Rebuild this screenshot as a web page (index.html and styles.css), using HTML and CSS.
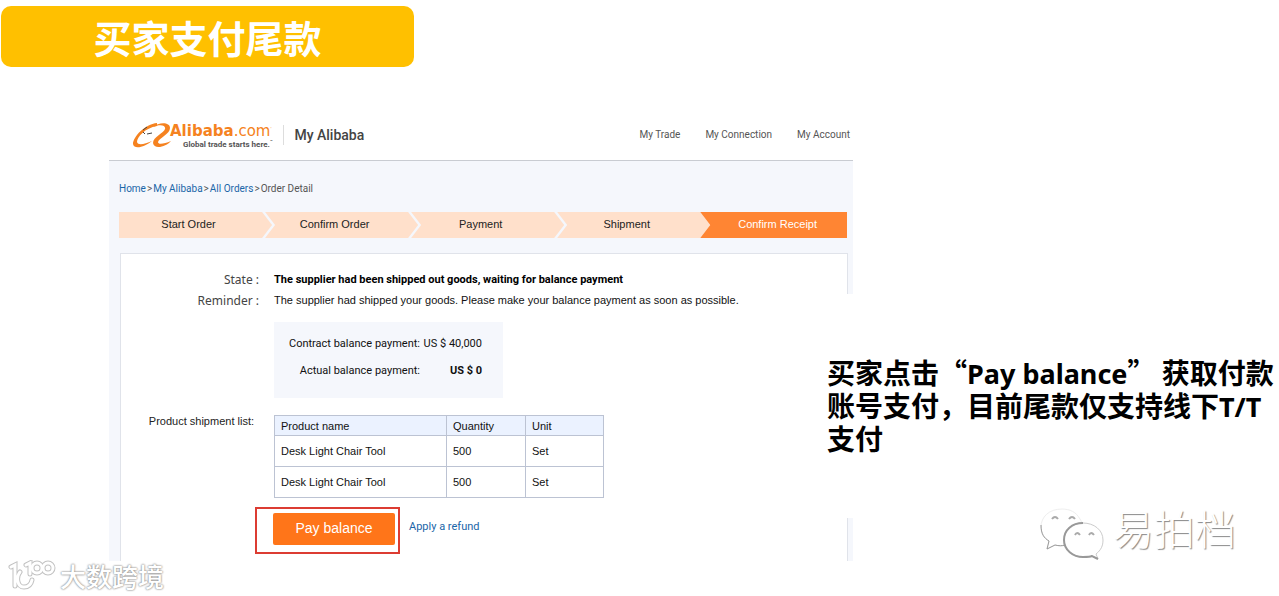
FILE: index.html
```
<!DOCTYPE html>
<html lang="zh-CN">
<head>
    <meta charset="UTF-8">
    <meta name="viewport" content="width=device-width, initial-scale=1.0">
    <title>买家支付尾款</title>
    <link rel="stylesheet" href="styles.css">
</head>
<body>

    <h1 class="slide-title">买家支付尾款</h1>

    <main class="slide">
        <div class="page">
            <header class="header">
                <div class="logo">
                    <svg class="logo-mark" viewBox="0 0 40 26" aria-hidden="true">
                        <path d="M24 1C12 2 0 15 0 22C1 28 12 25 19 19C12 22 5 24 4 20C4 15 12 6 24 4Z" fill="#f58220"/>
                        <path d="M20 5C26 0 37 0 37 6C37 12 26 16 25 20C25 23 31 22 38 19C33 25 21 28 20 21C20 15 31 11 32 7C33 3 27 2 20 5Z" fill="#f58220"/>
                        <path d="M10 8L14 5M10 10L12 12M14 12L19 11" fill="none" stroke="#444" stroke-width="1"/>
                    </svg>
                    <div class="logo-text">
                        <span class="logo-name"><b>Alibaba</b>.com<sup>'</sup></span>
                        <span class="logo-slogan">Global trade starts here.<sup>™</sup></span>
                    </div>
                </div>
                <span class="site-name">My Alibaba</span>
                <nav class="menu">
                    <a href="#">My Trade</a>
                    <a href="#">My Connection</a>
                    <a href="#">My Account</a>
                </nav>
            </header>

            <nav class="breadcrumb">
                <a href="#">Home</a><span>&gt;</span><a href="#">My Alibaba</a><span>&gt;</span><a href="#">All Orders</a><span>&gt;</span><span>Order Detail</span>
            </nav>

            <ol class="steps">
                <li>Start Order</li>
                <li>Confirm Order</li>
                <li>Payment</li>
                <li>Shipment</li>
                <li class="active">Confirm Receipt</li>
            </ol>

            <section class="order">
                <span class="label">State :</span>
                <strong class="state">The supplier had been shipped out goods, waiting for balance payment</strong>

                <span class="label">Reminder :</span>
                <span class="reminder">The supplier had shipped your goods. Please make your balance payment as soon as possible.</span>

                <dl class="amounts">
                    <dt>Contract balance payment:</dt>
                    <dd>US $ 40,000</dd>
                    <dt>Actual balance payment:</dt>
                    <dd><b>US $ 0</b></dd>
                </dl>

                <span class="label list-label">Product shipment list:</span>
                <table class="products">
                    <thead>
                        <tr><th class="col-name">Product name</th><th class="col-qty">Quantity</th><th>Unit</th></tr>
                    </thead>
                    <tbody>
                        <tr><td>Desk Light Chair Tool</td><td>500</td><td>Set</td></tr>
                        <tr><td>Desk Light Chair Tool</td><td>500</td><td>Set</td></tr>
                    </tbody>
                </table>

                <div class="actions">
                    <div class="highlight">
                        <button type="button" class="pay">Pay balance</button>
                    </div>
                    <a class="refund" href="#">Apply a refund</a>
                </div>
            </section>
        </div>

        <p class="note">买家点击“<span class="latin">Pay balance</span>” 获取付款账号支付，目前尾款仅支持线下<span class="latin">T/T</span>支付</p>
    </main>

    <!-- watermarks -->
    <div class="mark mark-left">
        <svg class="mark-logo" viewBox="0 -2 48 32" aria-hidden="true">
            <g fill="none" stroke-linecap="round">
                <path class="outline" d="M3 5L7 3V24M12 10C8 15 9 25 16 25C20 25 23 23 24 18M18 3L22 1V12"/>
                <circle class="outline" cx="29" cy="6" r="5"/>
                <circle class="outline" cx="40" cy="6" r="5"/>
                <path class="inner" d="M3 5L7 3V24M12 10C8 15 9 25 16 25C20 25 23 23 24 18M18 3L22 1V12"/>
                <circle class="inner" cx="29" cy="6" r="5"/>
                <circle class="inner" cx="40" cy="6" r="5"/>
            </g>
        </svg>
        <span>大数跨境</span>
    </div>
    <div class="mark mark-right">
        <svg class="wechat" viewBox="0 0 66 54" aria-hidden="true">
            <g fill="#fff" stroke="#aaa" stroke-width="1">
                <path d="M23 2C10 2 2 10 2 20C2 27 5 31 10 34L8 42L16 38C20 39 24 39 28 38C46 36 46 20 41 12C37 5 31 2 23 2Z" stroke="#eee"/>
                <path d="M2 18C2 27 5 31 10 34L8 42L16 38C20 39 23 39 26 38" fill="none" stroke="#999"/>
                <path d="M44 16C33 16 25 23 25 33C25 43 34 50 44 50C48 50 51 50 53 49L59 52L57 47C62 43 64 39 64 33C64 23 55 16 44 16Z" stroke="#ccc"/>
                <path d="M44 16C33 16 25 23 25 33C25 43 34 50 44 50C48 50 51 50 53 49L59 52" fill="none" stroke="#999" stroke-width="2"/>
                <path d="M13 12Q16 8 19 12M30 12Q33 8 36 12M36 28Q38 24 41 28M50 28Q52 24 55 28" fill="none" stroke-width="2"/>
            </g>
        </svg>
        <span>易拍档</span>
    </div>

</body>
</html>
```

FILE: styles.css
```
* { box-sizing: border-box; }
body {
    margin: 0;
    padding: 6px 1px 0;
    min-height: 100vh;
    position: relative;
    background: #fff;
    color: #222;
    font: 11px/16px "Liberation Sans", Arial, sans-serif;
}
a { color: #1a66a8; text-decoration: none; }

.slide-title {
    width: 413px;
    margin: 0;
    border-radius: 10px;
    background: #ffc000;
    color: #fff;
    font: bold 38px/61px "Noto Sans CJK SC", sans-serif;
    text-align: center;
}

/* The note overlaps the right edge of the page, so both share a row */
.slide {
    display: grid;
    grid-template-columns: 108fr 718fr 26fr 425fr;
    margin-top: 43px;
}
.page {
    grid-area: 1 / 2 / 2 / 4;
    background: #f5f7fc;
}

.header {
    display: flex;
    align-items: center;
    height: 51px;
    padding: 0 3px 0 24px;
    border-bottom: 1px solid #c9ccd2;
    background: #fff;
}
.logo { display: flex; }
.logo-mark { width: 40px; height: 26px; }
.logo-text { display: flex; flex-direction: column; margin-left: -3px; }
.logo-name { color: #f58220; font: 15px/19px "DejaVu Sans", sans-serif; }
.logo-slogan { margin-left: 13px; color: #555; font: bold 8px/8px Roboto, sans-serif; }
.logo sup { font-size: 4px; line-height: 1px; }
.site-name {
    margin-left: 11px;
    padding-left: 10px;
    border-left: 1px solid #ddd;
    color: #444;
    font: 500 14px/20px Roboto, sans-serif;
}
.menu { display: flex; gap: 25px; margin-left: auto; }
.menu a { color: #555; font: 10px/16px Roboto, sans-serif; }

.breadcrumb {
    display: flex;
    gap: 1px;
    padding: 20px 10px 15px;
    color: #555;
    font: 10px/16px Roboto, sans-serif;
}

.steps {
    display: flex;
    margin: 0 6px 0 10px;
    padding: 0;
    list-style: none;
}
.steps li {
    flex: 154 0 0;
    height: 26px;
    padding-right: 14px;
    background: #ffe0cb;
    line-height: 24px;
    text-align: center;
    clip-path: polygon(0 0, calc(100% - 10px) 0, 100% 50%, calc(100% - 10px) 100%, 0 100%, 10px 50%);
}
.steps li + li { margin-left: -7px; }
.steps li:first-child { clip-path: polygon(0 0, calc(100% - 10px) 0, 100% 50%, calc(100% - 10px) 100%, 0 100%); }
.steps li.active {
    flex-grow: 147;
    margin-left: -10px;
    padding: 0 3px 0 11px;
    background: #ff8533;
    color: #fff;
    clip-path: polygon(0 0, 100% 0, 100% 100%, 0 100%, 10px 50%);
}

.order {
    display: grid;
    grid-template-columns: 138px 1fr;
    column-gap: 15px;
    justify-items: start;
    margin: 15px 5px 0 11px;
    padding: 15px 0 7px;
    border: 1px solid #e0e3ea;
    border-bottom: 0;
    background: #fff;
    color: #111;
}
.label { justify-self: end; color: #444; font: 12px/21px "Noto Sans", sans-serif; }
.state { font: bold 11px/21px Roboto, sans-serif; color: #000; }
.reminder { line-height: 21px; }

.amounts {
    grid-column: 2;
    display: grid;
    grid-template-columns: 132px 60px;
    gap: 11px 2px;
    align-content: start;
    width: 229px;
    height: 76px;
    margin: 11px 0 17px;
    padding: 14px;
    background: #f5f7fc;
    font: 11px/16px Roboto, sans-serif;
    text-align: right;
}
.amounts dd { margin: 0; }

.list-label { padding-right: 5px; color: #222; font: 11px/12px "Liberation Sans", Arial, sans-serif; }
.products { width: 330px; border-collapse: collapse; table-layout: fixed; }
.products th, .products td {
    height: 31px;
    padding: 0 6px;
    border: 1px solid #bcc3d3;
    font-weight: normal;
    text-align: left;
}
.products th { height: 20px; background: #ebf2ff; }
.col-name { width: 172px; }
.col-qty { width: 79px; }

.actions { grid-column: 1 / -1; display: flex; gap: 9px; margin: 9px 0 0 134px; }
.highlight { padding: 4px 3px 7px 16px; border: 2px solid #dc3c32; }
.pay {
    display: block;
    width: 122px;
    height: 32px;
    padding: 0 0 3px;
    border: 0;
    border-radius: 2px;
    background: #ff7519;
    color: #fff;
    font: 14px/20px "Liberation Sans", Arial, sans-serif;
}
.refund { padding-top: 12px; font: 11px/16px Roboto, sans-serif; }

.note {
    grid-area: 1 / 3 / 2 / 5;
    align-self: start;
    height: 224px;
    margin: 184px 0 0;
    padding-top: 62px;
    background: #fff;
    color: #000;
    font: bold 28px/33px "Noto Sans CJK SC", sans-serif;
}
.latin { font-family: "Noto Sans", sans-serif; font-size: 27px; line-height: 1; }

.mark { position: absolute; display: flex; align-items: center; color: #fff; }
.mark-left {
    left: 8px;
    bottom: 4px;
    gap: 4px;
    font: 500 26px/32px "Noto Sans CJK SC", sans-serif;
    text-shadow: 0 0 2px #888, 0 0 2px #999;
}
.mark-logo { width: 48px; height: 32px; }
.outline { stroke: #c2c2c2; stroke-width: 5; }
.inner { stroke: #fff; stroke-width: 3; }
.mark-right {
    right: 43px;
    bottom: 32px;
    gap: 8px;
    font: 300 41px/46px "Noto Sans CJK SC", sans-serif;
    text-shadow: 1px 1px 1px #888;
}
.mark-right span { padding-bottom: 14px; }
.wechat { width: 66px; height: 54px; }
```
